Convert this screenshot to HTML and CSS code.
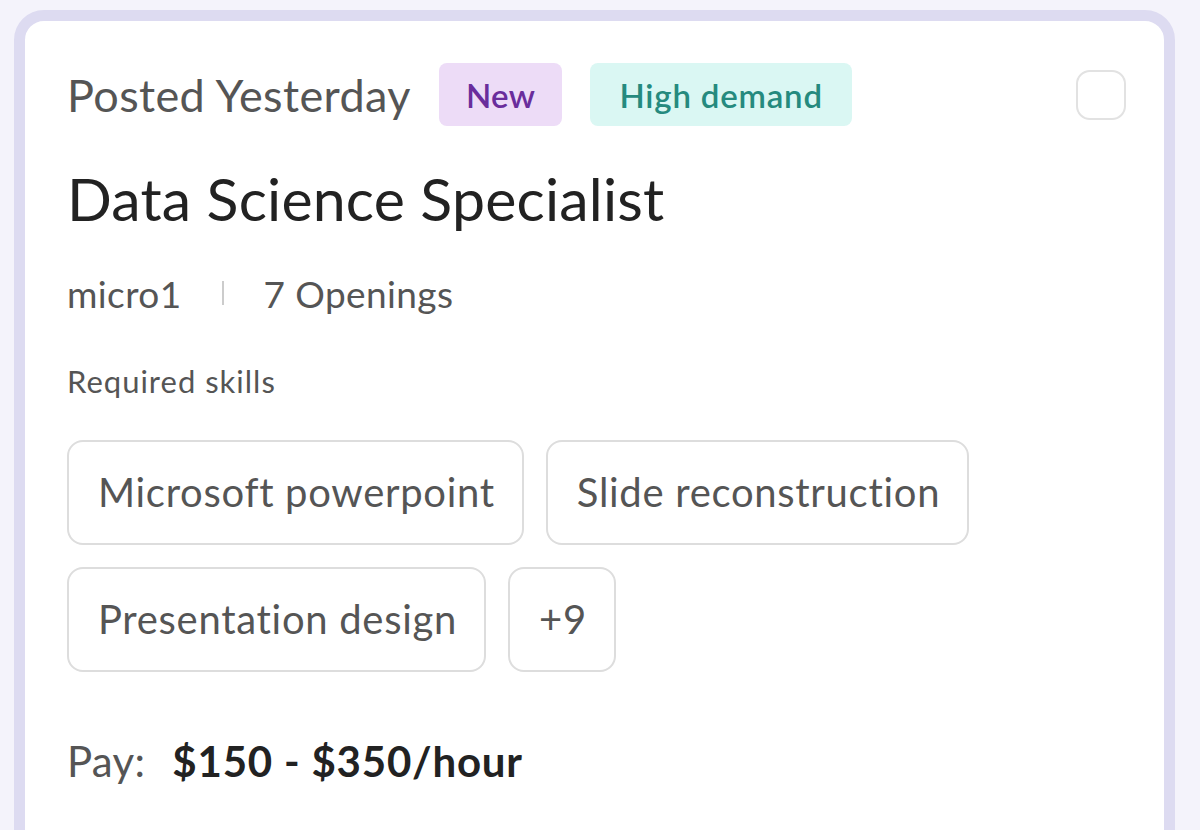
FILE: index.html
```html
<!DOCTYPE html>
<html lang="en">
<head>
    <meta charset="UTF-8">
    <meta name="viewport" content="width=device-width, initial-scale=1.0">
    <title>Job card</title>
    <link rel="stylesheet" href="styles.css">
</head>
<body>
    <div class="job-card">
        <div class="top-row">
            <span class="posted">Posted Yesterday</span>
            <span class="badge badge-new">New</span>
            <span class="badge badge-demand">High demand</span>
            <span class="check"></span>
        </div>
        <h1 class="job-title">Data Science Specialist</h1>
        <div class="meta">
            <span>micro1</span>
            <span class="divider"></span>
            <span>7 Openings</span>
        </div>
        <div class="skills-label">Required skills</div>
        <div class="skills">
            <span class="chip">Microsoft powerpoint</span>
            <span class="chip">Slide reconstruction</span>
            <span class="chip">Presentation design</span>
            <span class="chip">+9</span>
        </div>
        <div class="pay">Pay: <strong>$150 - $350/hour</strong></div>
    </div>
</body>
</html>
```

FILE: styles.css
```css
body, html { margin: 0; padding: 0; height: 100%; overflow: hidden; }
body {
    background: #f4f3fb;
    font-family: Lato, "Noto Sans", sans-serif;
    padding: 10px 25px 0 14px;
    box-sizing: border-box;
}
.job-card {
    background: #fff;
    border: 11px solid #dddbf1;
    border-radius: 30px;
    padding: 42px 40px 60px 42px;
    height: 900px;
    box-sizing: border-box;
}
.top-row { display: flex; align-items: center; }
.posted { font-size: 45px; letter-spacing: 0.4px; color: #555; margin-right: 28px; }
.badge {
    font-size: 33px; font-weight: 600; border-radius: 8px;
    height: 63px; padding: 0 27px; display: flex; align-items: center;
    margin-right: 28px; letter-spacing: 0.4px;
}
.badge-new { background: #eddcf7; color: #6a2d9c; }
.badge-demand { background: #daf7f3; color: #258a7e; padding: 0 29px; letter-spacing: 0.8px; }
.check {
    margin-left: auto; margin-right: -2px;
    width: 46px; height: 46px; border: 2px solid #e2e2e2; border-radius: 14px;
}
.job-title { font-size: 59px; font-weight: 400; color: #222; margin: 38px 0 0; line-height: 1.2; letter-spacing: 0.2px; }
.meta { display: flex; align-items: center; font-size: 37px; color: #555; margin-top: 36px; letter-spacing: 0.4px; }
.divider { width: 2px; height: 24px; background: #ccc; margin: 0 40px; }
.skills-label { font-size: 31px; letter-spacing: 1px; color: #555; margin-top: 46px; }
.skills { display: flex; flex-wrap: wrap; gap: 22px; margin-top: 40px; max-width: 920px; }
.chip {
    font-size: 40px; letter-spacing: 0.7px; color: #555; border: 2px solid #ddd; border-radius: 16px;
    height: 105px; padding: 0 27px 0 29px; display: flex; align-items: center; box-sizing: border-box;
}
.pay { font-size: 42px; color: #555; margin-top: 64px; letter-spacing: 0.3px; }
.pay strong { color: #222; margin-left: 16px; letter-spacing: 0.8px; }
```
